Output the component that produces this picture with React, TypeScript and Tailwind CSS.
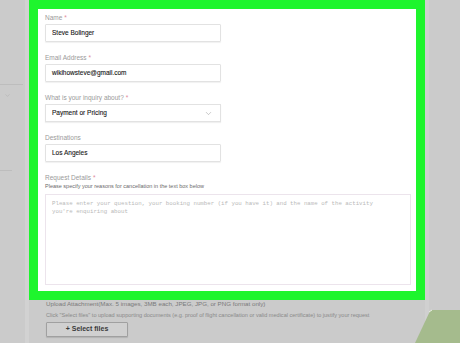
import { ChevronDown } from 'lucide-react';

const font = { fontFamily: '"Liberation Sans", Arial, sans-serif' };

function Field({ label, required, children }: { label: string; required?: boolean; children: React.ReactNode }) {
  return (
    <div className="flex flex-col">
      <div className="h-[10px] text-[6.5px] leading-[11px] text-[#9a9a9a]">
        {label}
        {required && <span className="ml-[2px] text-[#e08a9a]">*</span>}
      </div>
      {children}
    </div>
  );
}

function TextBox({ value }: { value: string }) {
  return (
    <div className="mt-[2px] h-[18px] w-[176px] flex items-center px-[6px] rounded-[1px] border border-[#e2e2e2] shadow-[0_1px_1px_rgba(0,0,0,0.06)] text-[6.5px] text-[#151515] [-webkit-text-stroke:0.1px_#151515]">
      {value}
    </div>
  );
}

export default function App() {
  return (
    <div className="w-[460px] h-[343px] bg-[#cbcbcb] relative overflow-hidden flex" style={font}>
      {/* left sidebar remnant */}
      <div className="w-[29px] h-full flex">
        <div className="w-[25px] h-full flex flex-col">
          <div className="h-[84px]" />
          <div className="h-px w-[23px] bg-[#bdbdbd]" />
          <div className="h-[7px]" />
          <ChevronDown className="w-[7px] h-[7px] ml-[4px] text-[#a9a9a9]" strokeWidth={1.5} />
          <div className="h-[71px]" />
          <div className="h-px w-[12px] bg-[#bdbdbd]" />
        </div>
        <div className="w-[4px] h-full bg-[#d2d2d2]" />
      </div>

      <div className="w-[396px] flex flex-col">
        {/* highlighted form */}
        <div className="h-[300px] border-[9px] border-[#1ef52d] bg-white px-[7px] pt-[3px] flex flex-col gap-[10px]">
          <Field label="Name" required>
            <TextBox value="Steve Bolinger" />
          </Field>
          <Field label="Email Address" required>
            <TextBox value="wikihowsteve@gmail.com" />
          </Field>
          <Field label="What is your inquiry about?" required>
            <div className="mt-[2px] h-[18px] w-[176px] flex items-center justify-between px-[6px] border border-[#e2e2e2] shadow-[0_1px_1px_rgba(0,0,0,0.06)] text-[6.5px] text-[#151515] [-webkit-text-stroke:0.1px_#151515]">
              Payment or Pricing
              <ChevronDown className="w-[9px] h-[9px] mr-[1px] text-[#8a8a8a]" strokeWidth={1.2} />
            </div>
          </Field>
          <Field label="Destinations">
            <TextBox value="Los Angeles" />
          </Field>
          <Field label="Request Details" required>
            <div className="h-[8px] text-[5.5px] leading-[8px] text-[#6a6a6a]">
              Please specify your reasons for cancellation in the text box below
            </div>
            <div
              className="mt-[4px] h-[91px] w-[366px] border border-[#ece4ec] px-[6px] pt-[5px] text-[5.75px] leading-[8px] text-[#b9b9b9] whitespace-nowrap"
              style={{ fontFamily: '"Liberation Mono", "DejaVu Sans Mono", monospace' }}
            >
              Please enter your question, your booking number (if you have it) and the name of the activity
              <br />
              you're enquiring about
            </div>
          </Field>
        </div>

        {/* upload section */}
        <div className="pl-[17px] flex flex-col">
          <div className="h-[8px] text-[6.2px] leading-[7px] text-[#7a7a7a] whitespace-nowrap">
            Upload Attachment(Max. 5 images, 3MB each, JPEG, JPG, or PNG format only)
          </div>
          <div className="mt-[3px] h-[8px] text-[5.55px] leading-[8px] text-[#8a8a8a] whitespace-nowrap">
            Click "Select files" to upload supporting documents (e.g. proof of flight cancellation or valid medical certificate) to justify your request
          </div>
          <button className="mt-[3px] h-[15px] w-[82px] border border-[#a0a0a0] rounded-[1px] bg-[#d0d0d0] shadow-[0_1px_1px_rgba(0,0,0,0.12)] text-[7px] font-bold text-[#3a3a3a] flex items-center justify-center">
            + Select files
          </button>
        </div>
      </div>

      <div className="flex-1 h-full flex">
        <div className="w-[4px] h-full bg-[#d0d0d0]" />
      </div>

      {/* decorative corner shape */}
      <svg className="absolute right-0 bottom-0" width="46" height="34" viewBox="0 0 46 34">
        <polygon points="1,34 16,2 18,1 46,1 46,34" fill="#a5bb8d" />
        <line x1="15" y1="3" x2="18" y2="1" stroke="#e8f0e0" strokeWidth="1" />
      </svg>
    </div>
  );
}
